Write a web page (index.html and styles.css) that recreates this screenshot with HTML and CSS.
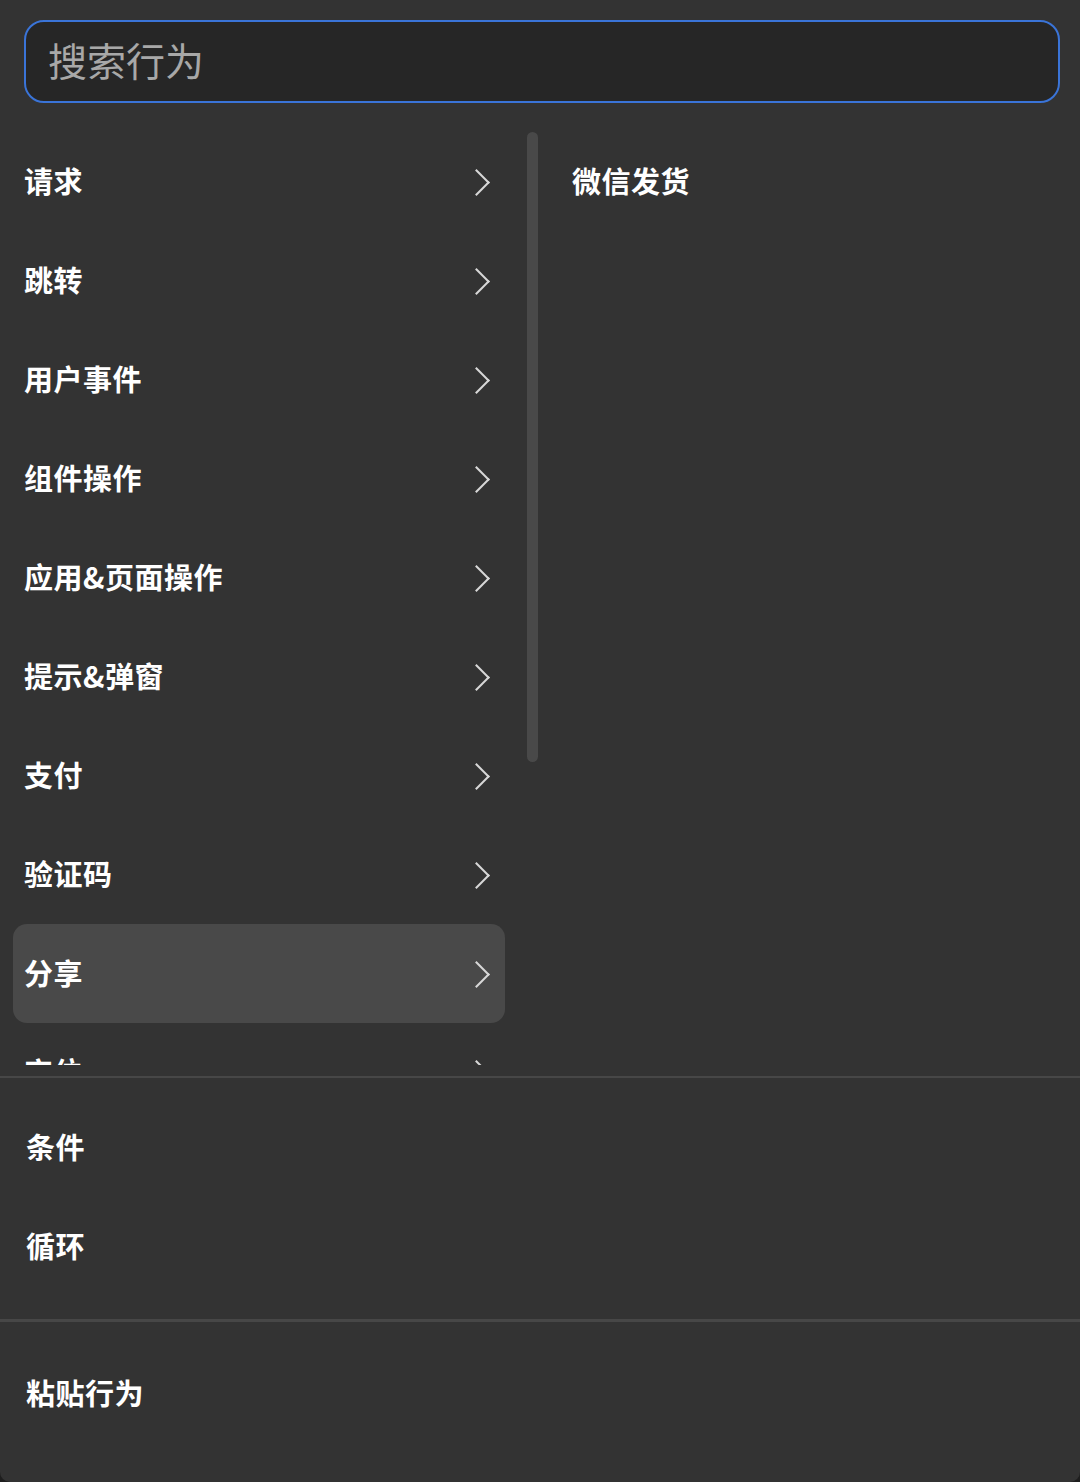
FILE: index.html
```html
<!DOCTYPE html>
<html lang="zh-CN">
<head>
    <meta charset="UTF-8">
    <meta name="viewport" content="width=device-width, initial-scale=1.0">
    <title>添加行为</title>
    <link rel="stylesheet" href="styles.css">
</head>
<body>
    <div class="panel">
        <div class="search">
            <input type="text" placeholder="搜索行为">
        </div>

        <div class="picker">
            <ul class="menu">
                <li class="item">请求<span class="chev"></span></li>
                <li class="item">跳转<span class="chev"></span></li>
                <li class="item">用户事件<span class="chev"></span></li>
                <li class="item">组件操作<span class="chev"></span></li>
                <li class="item">应用&amp;页面操作<span class="chev"></span></li>
                <li class="item">提示&amp;弹窗<span class="chev"></span></li>
                <li class="item">支付<span class="chev"></span></li>
                <li class="item">验证码<span class="chev"></span></li>
                <li class="item active">分享<span class="chev"></span></li>
                <li class="item">定位<span class="chev"></span></li>
            </ul>
            <div class="track"><div class="thumb"></div></div>
            <ul class="sub">
                <li class="item">微信发货</li>
            </ul>
        </div>

        <div class="group">
            <div class="item">条件</div>
            <div class="item">循环</div>
        </div>

        <div class="group last">
            <div class="item">粘贴行为</div>
        </div>
    </div>
</body>
</html>
```

FILE: styles.css
```css
html, body {
    margin: 0;
    background: #1e1e1e;
}
.panel {
    height: 1482px;
    background: #333333;
    border-radius: 0 0 10px 10px;
    padding-top: 20px;
    box-sizing: border-box;
    font-family: "Noto Sans CJK SC", "Liberation Sans", sans-serif;
    color: #ffffff;
    overflow: hidden;
}
.search {
    margin: 0 20px 0 24px;
    height: 83px;
    box-sizing: border-box;
    border: 2px solid #3a74d8;
    border-radius: 20px;
    background: #262626;
    display: flex;
    align-items: center;
    padding: 0 0 5px 22px;
}
.search input {
    width: 100%;
    border: none;
    outline: none;
    background: transparent;
    font-family: inherit;
    font-size: 39px;
    color: #ffffff;
    padding: 0;
}
.search input::placeholder {
    color: #a8a8a8;
}
.picker {
    display: flex;
    margin-top: 29px;
    height: 933px;
    overflow: hidden;
}
ul {
    list-style: none;
    margin: 0;
    padding: 0;
}
.item {
    height: 99px;
    box-sizing: border-box;
    padding-bottom: 4px;
    display: flex;
    align-items: center;
    font-size: 29px;
    font-weight: 700;
    letter-spacing: 0.5px;
}
.menu {
    width: 492px;
    margin-left: 13px;
    flex-shrink: 0;
}
.menu .item {
    justify-content: space-between;
    padding: 0 16px 3px 11px;
    border-radius: 14px;
}
.menu .item.active {
    background: #494949;
}
.chev {
    width: 19px;
    height: 19px;
    box-sizing: border-box;
    border-top: 2.5px solid #d8d8d8;
    border-right: 2.5px solid #d8d8d8;
    transform: rotate(45deg);
    margin: 4px 3px 0 0;
}
.track {
    margin-left: 22px;
    width: 11px;
    flex-shrink: 0;
}
.thumb {
    height: 630px;
    background: #494949;
    border-radius: 6px;
}
.sub {
    margin-left: 34px;
}
.group {
    margin-top: 11px;
    border-top: 2px solid #474747;
    padding: 20px 26px 23px;
}
.group.last {
    margin-top: 0;
    border-top-width: 3px;
    padding-top: 22px;
}
```
